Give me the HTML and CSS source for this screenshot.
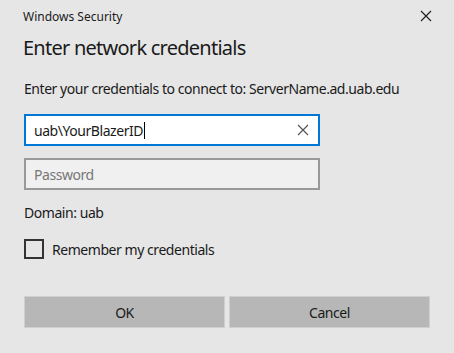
FILE: index.html
```html
<!DOCTYPE html>
<html lang="en">
<head>
  <meta charset="UTF-8">
  <title>Windows Security</title>
  <link rel="stylesheet" href="styles.css">
</head>
<body>
  <div class="dlg">
    <!-- 타이틀바 -->
    <div class="titlebar">
      <span class="app">Windows Security</span>
      <svg class="close" width="12" height="12" viewBox="0 0 12 12">
        <path d="M1 1L11 11M11 1L1 11" stroke="#222" stroke-width="1.2" fill="none"/>
      </svg>
    </div>
    <h1 class="head">Enter network credentials</h1>
    <p class="msg">Enter your credentials to connect to: ServerName.ad.uab.edu</p>

    <!-- 입력박스 -->
    <div class="field user">
      <span class="val">uab\YourBlazerID<i class="caret"></i></span>
      <svg class="clr" width="12" height="12" viewBox="0 0 12 12">
        <path d="M1 1L11 11M11 1L1 11" stroke="#555" stroke-width="1.2" fill="none"/>
      </svg>
    </div>
    <div class="field pass">
      <span class="ph">Password</span>
    </div>

    <p class="domain">Domain: uab</p>

    <label class="chk">
      <span class="box"></span>
      <span>Remember my credentials</span>
    </label>

    <!-- 버튼 -->
    <div class="btns">
      <div class="btn">OK</div>
      <div class="btn">Cancel</div>
    </div>
  </div>
</body>
</html>
```

FILE: styles.css
```css
html, body{
  margin: 0;
  padding: 0;
  height: 100%;
  background: #e6e6e6;
}
body{
  font-family: "Noto Sans", "Open Sans", sans-serif;
  color: #1a1a1a;
  letter-spacing: -0.45px;
}
p, h1{
  margin: 0;
}

.dlg{
  padding: 0 24px;
}

.titlebar{
  display: flex;
  justify-content: space-between;
  align-items: center;
  height: 32px;
  margin-right: -2px;
}
.app{
  font-size: 12px;
  letter-spacing: 0;
  margin-left: -1px;
}

.head{
  font-size: 20px;
  font-weight: normal;
  line-height: 28px;
  letter-spacing: -0.75px;
  margin-top: 2px;
  margin-left: -1px;
}

.msg{
  font-size: 14px;
  line-height: 20px;
  margin-top: 17px;
}

/* 입력박스 공통 */
.field{
  width: 296px;
  height: 32px;
  box-sizing: border-box;
  border: 2px solid #999;
  display: flex;
  align-items: center;
  justify-content: space-between;
  padding: 0 9px 0 8px;
  font-size: 14px;
}
.user{
  margin-top: 15px;
  background: #fff;
  border-color: #0078d7;
}
.pass{
  margin-top: 12px;
  background: #f0f0f0;
}
.ph{
  color: #777;
}
.caret{
  display: inline-block;
  width: 1px;
  height: 17px;
  margin-left: 1px;
  background: #000;
  vertical-align: -3px;
}

.domain{
  font-size: 14px;
  line-height: 20px;
  margin-top: 13px;
}

.chk{
  display: flex;
  align-items: center;
  gap: 8px;
  margin-top: 16px;
  font-size: 14px;
}
.box{
  width: 20px;
  height: 20px;
  box-sizing: border-box;
  border: 2px solid #333;
}

.btns{
  display: flex;
  gap: 4px;
  margin-top: 37px;
}
.btn{
  width: 201px;
  height: 32px;
  box-sizing: border-box;
  border: 1px solid #cfcfcf;
  background: #b7b7b7;
  font-size: 14px;
  display: flex;
  align-items: center;
  justify-content: center;
}
```
